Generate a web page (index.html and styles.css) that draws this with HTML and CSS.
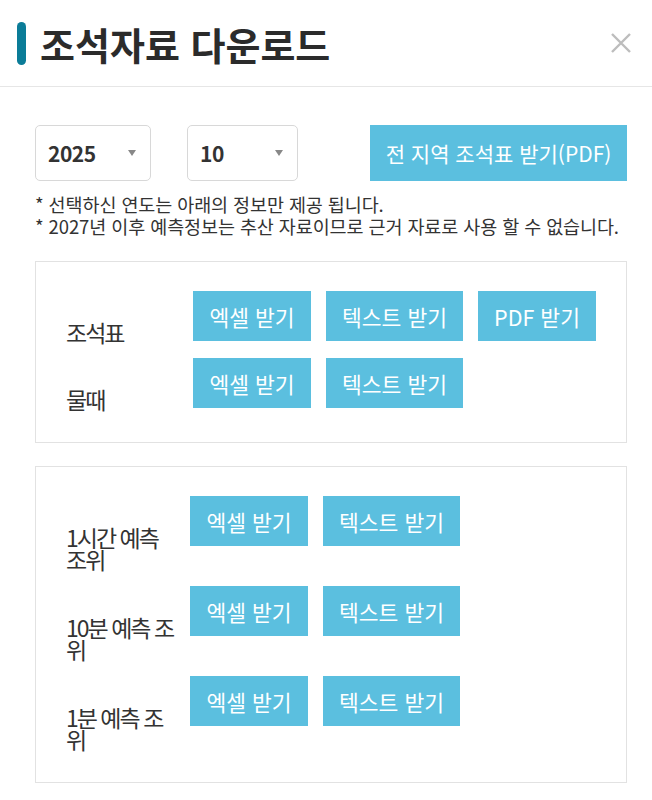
FILE: index.html
```html
<!DOCTYPE html>
<html lang="ko">
<head>
    <meta charset="UTF-8">
    <meta name="viewport" content="width=device-width, initial-scale=1.0">
    <title>조석자료 다운로드</title>
    <link rel="stylesheet" href="styles.css">
</head>
<body>
    <div class="popup">
        <div class="popup-head">
            <span class="head-bar"></span>
            <h1 class="title">조석자료 다운로드</h1>
            <span class="close">
                <svg width="22" height="22" viewBox="0 0 22 22">
                    <path d="M2 2 L20 20 M20 2 L2 20" stroke="#bdbdbd" stroke-width="2.4" fill="none"/>
                </svg>
            </span>
        </div>

        <div class="popup-body">
            <div class="top-row">
                <div class="select select-year">
                    <span>2025</span>
                    <i class="caret"></i>
                </div>
                <div class="select select-month">
                    <span>10</span>
                    <i class="caret"></i>
                </div>
                <button class="button button-all">전 지역 조석표 받기(PDF)</button>
            </div>

            <p class="notes">
                * 선택하신 연도는 아래의 정보만 제공 됩니다.<br>
                * 2027년 이후 예측정보는 추산 자료이므로 근거 자료로 사용 할 수 없습니다.
            </p>

            <div class="box">
                <div class="row row-wide">
                    <div class="label">조석표</div>
                    <div class="buttons">
                        <button class="button btn-excel">엑셀 받기</button>
                        <button class="button btn-text">텍스트 받기</button>
                        <button class="button btn-excel">PDF 받기</button>
                    </div>
                </div>
                <div class="row row-wide">
                    <div class="label">물때</div>
                    <div class="buttons">
                        <button class="button btn-excel">엑셀 받기</button>
                        <button class="button btn-text">텍스트 받기</button>
                    </div>
                </div>
            </div>

            <div class="box">
                <div class="row">
                    <div class="label">1시간 예측 조위</div>
                    <div class="buttons">
                        <button class="button btn-excel">엑셀 받기</button>
                        <button class="button btn-text">텍스트 받기</button>
                    </div>
                </div>
                <div class="row">
                    <div class="label">10분 예측 조위</div>
                    <div class="buttons">
                        <button class="button btn-excel">엑셀 받기</button>
                        <button class="button btn-text">텍스트 받기</button>
                    </div>
                </div>
                <div class="row">
                    <div class="label">1분 예측 조위</div>
                    <div class="buttons">
                        <button class="button btn-excel">엑셀 받기</button>
                        <button class="button btn-text">텍스트 받기</button>
                    </div>
                </div>
            </div>
        </div>
    </div>
</body>
</html>
```

FILE: styles.css
```css
body {
    margin: 0;
    background-color: #ffffff;
    font-family: "Noto Sans CJK KR", "Noto Sans", sans-serif;
    color: #333333;
}

.popup {
    width: 652px;
}

.popup-head {
    display: flex;
    align-items: center;
    height: 86px;
    padding-left: 17px;
    border-bottom: 1px solid #e6e6e6;
}

.head-bar {
    width: 9px;
    height: 43px;
    border-radius: 5px;
    background-color: #0b7c98;
}

.title {
    margin: 0 0 0 14px;
    font-size: 38px;
    font-weight: bold;
    color: #2b2b2b;
}

.close {
    display: flex;
    margin-left: auto;
    margin-right: 20px;
}

.popup-body {
    padding: 38px 25px 0 35px;
}

.top-row {
    display: flex;
    align-items: center;
}

.select {
    display: flex;
    align-items: center;
    justify-content: space-between;
    box-sizing: border-box;
    height: 56px;
    padding: 0 14px 0 12px;
    border: 1px solid #d8d8d8;
    border-radius: 5px;
    font-size: 21px;
    font-weight: bold;
    letter-spacing: -0.5px;
}

.select-year {
    width: 116px;
}

.select-month {
    width: 111px;
    margin-left: 36px;
}

.caret {
    width: 0;
    height: 0;
    border-left: 4.5px solid transparent;
    border-right: 4.5px solid transparent;
    border-top: 6px solid #888888;
}

.button {
    height: 50px;
    padding: 0;
    background-color: #5bbfdf;
    color: #ffffff;
    border: none;
    font-family: inherit;
    font-size: 21.5px;
    cursor: pointer;
}

.button-all {
    width: 257px;
    height: 56px;
    margin-left: auto;
    font-size: 21px;
}

.notes {
    margin: 12px 0 0 0;
    font-size: 18.5px;
    line-height: 22px;
    letter-spacing: -0.1px;
}

.box {
    margin-top: 24px;
    padding: 29px 30px 32px 30px;
    border: 1px solid #e2e2e2;
}

.box + .box {
    margin-top: 23px;
}

.row {
    display: grid;
    grid-template-columns: 108px 1fr;
    column-gap: 16px;
    align-items: start;
}

.row-wide {
    grid-template-columns: 111px 1fr;
}

.row + .row {
    margin-top: 16px;
}

.row-wide + .row-wide {
    margin-top: 15px;
}

.label {
    padding-top: 30px;
    font-size: 23px;
    line-height: 22px;
    letter-spacing: -2px;
}

.buttons {
    display: flex;
    gap: 15px;
}

.btn-excel {
    width: 118px;
}

.btn-text {
    width: 137px;
}
```
